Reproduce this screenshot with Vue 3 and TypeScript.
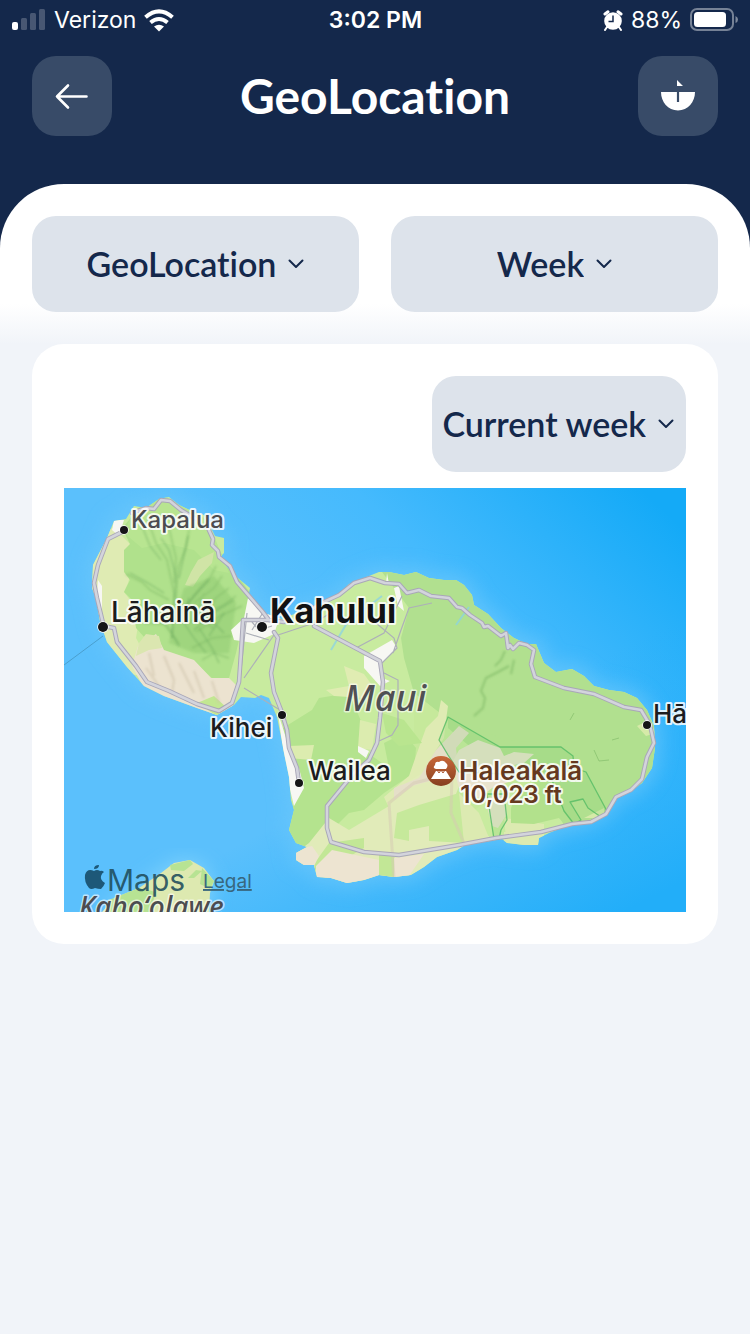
<script setup lang="ts">
import { ref } from 'vue'

interface Place {
  name: string
  x: number
  y: number
  size: number
  weight: number
  fill: string
  dot?: { x: number; y: number; r: number }
  anchor?: 'start' | 'middle' | 'end'
  italic?: boolean
}

const metric = ref('GeoLocation')
const period = ref('Week')
const range = ref('Current week')

const metrics = ['GeoLocation', 'Activity']
const periods = ['Day', 'Week', 'Month']
const ranges = ['Current week', 'Last week']

const places: Place[] = [
  { name: 'Kapalua', x: 67, y: 40, size: 24, weight: 500, fill: '#4c4c50', dot: { x: 60, y: 42, r: 4 } },
  { name: 'Lāhainā', x: 47, y: 134, size: 28, weight: 500, fill: '#1c1c1e', dot: { x: 39, y: 139, r: 5 } },
  { name: 'Kahului', x: 206, y: 135, size: 34, weight: 700, fill: '#111113', dot: { x: 198, y: 139, r: 5 } },
  { name: 'Maui', x: 280, y: 223, size: 36, weight: 500, fill: '#505054', italic: true },
  { name: 'Kihei', x: 146, y: 249, size: 26, weight: 500, fill: '#1c1c1e', dot: { x: 218, y: 227, r: 4 } },
  { name: 'Wailea', x: 244, y: 292, size: 26, weight: 500, fill: '#1c1c1e', dot: { x: 235, y: 295, r: 4 } },
  { name: 'Hāna', x: 589, y: 235, size: 26, weight: 500, fill: '#1c1c1e', dot: { x: 583, y: 237, r: 4 } },
  { name: 'Haleakalā', x: 395, y: 292, size: 26, weight: 600, fill: '#65391f' },
  { name: '10,023 ft', x: 447, y: 315, size: 24, weight: 600, fill: '#65391f', anchor: 'middle' },
  { name: 'Kahoʻolawe', x: 15, y: 429, size: 28, weight: 500, fill: '#4c4c50', italic: true },
]

const island =
  'M50 33L62 31L70 18L82 20L95 11L105 9L115 17L130 24L140 27L147 40L151 48L160 50L160 65L155 70L170 87L186 100L184 110L200 125L218 131L245 120L264 115L276 106L285 96L300 90L315 84L325 84L340 87L352 84L365 90L380 92L392 92L400 97L408 107L410 117L424 126L437 140L450 150L463 156L472 156L480 175L492 184L508 181L520 188L530 198L545 202L560 204L573 210L583 222L590 238L591 260L588 280L578 295L567 303L555 307L545 320L537 328L520 335L500 339L485 345L475 350L474 357L460 357L443 355L438 351L401 357L393 362L373 369L360 379L347 387L330 389L315 387L300 392L283 395L267 390L253 389L250 377L240 377L232 372L232 365L243 359L232 355L225 342L230 322L227 312L225 289L220 265L217 249L213 229L205 210L197 207L191 210L177 209L170 217L153 227L133 220L100 208L80 198L63 179L43 154L36 133L32 110L28 100L29 77L43 50Z'

const highways =
  'M58 44L44 51L34 77L30 95L33 110L39 135M39 138L50 140L53 154L72 178L83 194L105 203L133 216L155 223L168 215L175 194L177 165L179 132H205M68 25L82 20L90 21L97 12L106 13L117 22L132 31M144 40L149 51L148 57L154 63L155 69L166 78L173 94L198 123L205 132M210 144L214 150L207 185L210 204L217 222L223 242L225 260L233 280L235 295M205 132L220 134M250 138L316 173L319 194L316 230L313 255L305 272L290 285L263 318L263 340L267 354L300 364L335 367L395 357L432 350L477 344L508 336L527 334L542 326L552 309L567 302L578 291L583 269L590 255L586 237L577 222L560 219L530 206L500 200L471 189L467 176L470 162L463 157L455 155L449 161L446 157L444 160L442 145L437 148L424 138L420 139L418 135L406 127L398 120L393 119L385 110L367 108L355 102L343 105L335 96L321 95L306 90L290 95L275 107L262 113L235 128'
</script>

<template>
  <div class="screen">
    <header class="top">
      <div class="status">
        <div class="status-side">
          <svg class="signal" viewBox="0 0 34 22" aria-hidden="true">
            <rect x="0" y="13" width="6" height="8" rx="2" fill="#fff" />
            <g fill="#fff" opacity="0.22">
              <rect x="9" y="9" width="6" height="12" rx="1.5" />
              <rect x="18" y="4" width="6" height="17" rx="1.5" />
              <rect x="27" y="0" width="6" height="21" rx="1.5" />
            </g>
          </svg>
          <span>Verizon</span>
          <svg class="wifi" viewBox="0 0 30 23" aria-hidden="true">
            <g fill="none" stroke="#fff" stroke-width="4">
              <path d="M1.5 8.3Q15-3.5 28.500 8.3" />
              <path d="M6.500 13.500Q15 6.500 23.500 13.500" />
            </g>
            <path d="M10 17.600Q15 13.800 20 17.600L15 22.600Z" fill="#fff" />
          </svg>
        </div>
        <time class="clock">3:02 PM</time>
        <div class="status-side status-end">
          <svg class="alarm" viewBox="0 0 20 21" aria-hidden="true">
            <g stroke="#fff" stroke-linecap="round" fill="none">
              <path d="M2 4L5 1.800M18 4L15 1.800" stroke-width="3" />
              <path d="M4 17L2 20M16 17L18 20" stroke-width="2" />
            </g>
            <circle cx="10" cy="11" r="8.800" fill="#fff" />
            <path d="M10 5.500V11.500H5.500" fill="none" stroke="#14284b" stroke-width="1.500" />
          </svg>
          <span>88%</span>
          <svg class="battery" viewBox="0 0 49 24" aria-hidden="true">
            <rect x="1" y="1" width="42" height="21" rx="6" fill="none" stroke="#fff" stroke-opacity="0.42" stroke-width="2" />
            <rect x="4" y="4" width="32" height="15" rx="3.500" fill="#fff" />
            <path d="M45.500 8Q48 9 48 11.500Q48 14 45.500 15Z" fill="#fff" opacity="0.45" />
          </svg>
        </div>
      </div>
      <div class="bar">
        <button class="square" type="button" aria-label="Back">
          <svg viewBox="0 0 80 80" aria-hidden="true">
            <path d="M36 29.500L25 40.500L36 51.500M25 40.500H54.500" fill="none" stroke="#fff" stroke-width="2.600" stroke-linecap="round" stroke-linejoin="round" />
          </svg>
        </button>
        <h1>GeoLocation</h1>
        <button class="square" type="button" aria-label="Sailing menu">
          <svg viewBox="0 0 80 80" aria-hidden="true">
            <path d="M39 24L45 30H39ZM23 36H57C57 46 50 54.500 40 54.500S23 46 23 36Z" fill="#fff" />
            <path d="M40 36V46" stroke="#384b68" stroke-width="2.200" />
          </svg>
        </button>
      </div>
    </header>

    <main>
      <section class="filters">
        <label class="pick">
          <select v-model="metric" aria-label="Metric">
            <option v-for="m in metrics" :key="m">{{ m }}</option>
          </select>
          <svg class="chevron" viewBox="0 0 16 10" aria-hidden="true"><path d="M1.500 1.500L8 8L14.500 1.500" /></svg>
        </label>
        <label class="pick">
          <select v-model="period" aria-label="Period">
            <option v-for="p in periods" :key="p">{{ p }}</option>
          </select>
          <svg class="chevron" viewBox="0 0 16 10" aria-hidden="true"><path d="M1.500 1.500L8 8L14.500 1.500" /></svg>
        </label>
      </section>

      <section class="card">
        <label class="pick pick-range">
          <select v-model="range" aria-label="Range">
            <option v-for="r in ranges" :key="r">{{ r }}</option>
          </select>
          <svg class="chevron" viewBox="0 0 16 10" aria-hidden="true"><path d="M1.500 1.500L8 8L14.500 1.500" /></svg>
        </label>

        <svg class="map" viewBox="0 0 622 424" role="group" aria-label="Map of Maui">
          <defs>
            <linearGradient id="sea" x1="0.450" y1="0.500" x2="1" y2="0.100">
              <stop offset="0" stop-color="#5bc0fc" />
              <stop offset="0.450" stop-color="#45bafd" />
              <stop offset="1" stop-color="#14aaf7" />
            </linearGradient>
            <linearGradient id="deep" x1="0.600" y1="0.600" x2="0.900" y2="1">
              <stop offset="0" stop-color="#22aef9" stop-opacity="0" />
              <stop offset="1" stop-color="#22aef9" />
            </linearGradient>
            <linearGradient id="peak" x1="0" y1="0" x2="0" y2="1">
              <stop offset="0" stop-color="#c9683a" />
              <stop offset="1" stop-color="#86401f" />
            </linearGradient>
            <filter id="glow" x="-20%" y="-20%" width="140%" height="140%"><feGaussianBlur stdDeviation="9" /></filter>
            <filter id="soft" x="-20%" y="-20%" width="140%" height="140%"><feGaussianBlur stdDeviation="1" /></filter>
            <clipPath id="land"><path :d="island" /></clipPath>
          </defs>

          <rect width="622" height="424" fill="url(#sea)" />
          <rect width="622" height="424" fill="url(#deep)" />
          <path :d="island" fill="#6cc8fb" stroke="#6cc8fb" stroke-width="12" filter="url(#glow)" opacity="0.650" />
          <path d="M0 177L39 148" stroke="#4a9fce" stroke-width="1" />

          <!-- Kahoʻolawe -->
          <path d="M38 424L50 410L75 398L97 382L110 373L126 371L140 378L150 393L146 424Z" fill="#7cd0fb" filter="url(#glow)" />
          <path d="M38 424L50 410L75 400L97 385L110 375L126 372L140 380L150 393L146 405L145 424Z" fill="#dde9b0" />
          <path d="M106 377L126 372L129 376L120 383L107 382ZM45 412L75 400L92 404L86 424H40ZM138 380L150 393L146 401L136 396ZM124 390L132 382L138 383L130 390Z" fill="#b7e393" />

          <path :d="island" fill="#c8eb9f" />
          <g clip-path="url(#land)">
            <!-- West Maui mountains -->
            <path d="M25 45L50 40L66 56L60 70L68 80L64 95L60 104L76 125L72 150L80 165L90 190L60 185L35 150L20 100Z" fill="#dfebb3" />
            <path d="M60 62L66 56L58 40L72 24L90 18L115 22L145 45L160 70L190 110L180 130L172 165L165 190L150 192L135 178L110 170L90 160L72 140L68 112L60 104L66 92L60 84Z" fill="#b0e18c" />
            <path d="M70 22L100 8L140 30L150 48L165 85L150 82L130 62L100 55L78 60L60 45Z" fill="#b8e591" />
            <path d="M134 72L150 64L148 75L136 88L129 99L121 97L127 84Z" fill="#d0e4a6" />
            <path d="M74 158L92 146L100 162L130 172L147 190L165 190L173 198L168 222L150 228L110 214L80 200L68 178Z" fill="#ece3d0" />
            <path d="M75 155L82 146L95 148L98 160L85 162L72 168Z" fill="#dbe6b0" />
            <path d="M133 215L150 208L163 220L153 228Z" fill="#c2e792" />
            <path d="M120 100L150 88L172 115L165 165L130 165L105 155L112 125Z" fill="#94cd76" opacity="0.600" filter="url(#soft)" />
            <g fill="none" stroke="#86c06c" stroke-width="2" opacity="0.500" filter="url(#soft)">
              <path d="M84 32L92 55L103 72L110 105L108 150M105 40L112 70L110 95M125 42L122 60L114 80L112 110M62 86L78 94L86 102L105 112M152 78L146 90L138 98L116 125M165 100L152 110L146 118L125 135M178 118L156 128L132 144M80 135L100 136L115 156M168 148L148 150L128 160M165 170L150 165L138 172M140 105L130 130L150 140M158 88L150 100L130 115M172 108L158 118L140 126" />
            </g>
            <g fill="none" stroke="#5f9f58" stroke-width="1.200" opacity="0.450" filter="url(#soft)">
              <path d="M78 38L86 58L97 72M97 50L105 62L112 88L110 120L108 150M124 48L115 90M66 85L84 95L100 105M145 92L130 108L118 125M170 112L150 124L130 142M92 130L104 138L115 158M140 125L150 135L160 145M135 140L148 160L155 175M120 135L130 150L142 165M160 125L145 148M125 110L120 128" />
            </g>
            <g fill="none" stroke="#cfc3ab" stroke-width="2" opacity="0.600" filter="url(#soft)">
              <path d="M85 165L90 188M100 168L110 192L108 205M115 175L130 205M130 183L140 210M148 193L155 215M82 180L95 198" />
            </g>

            <!-- Upcountry forests -->
            <path d="M315 80H400L480 150L600 200V300L540 325L500 336L470 300L450 262L382 230L350 205L340 170L337 150L345 120Z" fill="#b1e08f" />
            <path d="M350 205L382 230L376 262L440 258L500 262L520 300L470 320L440 300L400 330L350 300Z" fill="#c6e99b" />
            <path d="M384 225L410 238L440 252L498 256L514 268L524 284L545 322L520 335L500 338L486 300L450 275L410 262L384 240Z" fill="#b1e08f" />
            <path d="M219 240L248 222L255 210L285 205L300 240L294 258L325 280L320 255L340 245L352 260L350 285L320 305L300 322L285 325L265 345L235 362L222 342L232 310Z" fill="#b4e38e" />
            <path d="M280 178L300 186L310 200L300 210L270 208L262 202L285 198Z" fill="#e0ecb2" />
            <path d="M377 212L384 218L382 232L380 250L372 262L360 290L325 320L320 309L345 288L353 265L362 240L374 228Z" fill="#dfebb3" />
            <path d="M318 225L340 232L358 255L335 258L322 245Z" fill="#b9e58f" />
            <path d="M225 258L250 257L247 272L225 270ZM296 232L312 236L308 262L294 260Z" fill="#dcecaf" />

            <!-- South slopes -->
            <path d="M225 370L245 355L265 330L285 342L325 318L345 293L385 270L400 285L392 306L410 330L430 355L395 362L345 388L280 397L240 382Z" fill="#e1ebb9" />
            <path d="M333 325L355 317L395 305L410 325L402 355L365 353L365 338L345 342L345 353L330 350Z" fill="#c6e99b" />
            <path d="M265 355L300 350L300 360L262 382L250 376ZM315 365L330 365L332 390H315ZM248 370L260 375L262 385L253 388Z" fill="#c2e796" />
            <path d="M228 362L248 358L255 368L250 378H235ZM252 378L268 362L315 372V388L285 396L252 392ZM330 370L360 366L345 388L330 390Z" fill="#ede4d1" />
            <path d="M330 300L355 290L372 262L395 238L405 245L392 260L395 285L348 298L330 312Z" fill="#e5dfc8" />
            <path d="M395 262L414 252L436 260L440 268L450 264L470 266L460 275L445 278L450 292L428 300L415 310L395 300L388 275Z" fill="#e9e3ce" />
            <path d="M421 310L440 306L443 326L434 340L428 338Z" fill="#e9e3ce" />
            <path d="M395 305L415 325L425 350L400 355ZM440 330L480 336L480 345L442 350ZM440 344H480V360H440Z" fill="#dceab1" />
            <path d="M447 320L455 300L480 290L500 315L495 330L470 336L447 335Z" fill="#b2e18c" />
            <path d="M573 238L585 232L592 245L582 248ZM540 320L520 330L540 330Z" fill="#d6eaa8" />
            <g fill="none" stroke="#7db765" stroke-width="2" opacity="0.600" filter="url(#soft)">
              <path d="M441 163L437 172L431 178M445 178L434 184L422 190L417 203L421 210L419 220L410 228M450 172L447 186" />
            </g>
            <path d="M545 272L535 273L530 262M555 250L548 252M510 225L506 232" fill="none" stroke="#7db765" stroke-width="1" opacity="0.600" />
            <path d="M330 390L325 315L350 295L390 285M388 285L387 325L400 355" fill="none" stroke="#d6c9b4" stroke-width="3" opacity="0.500" />

            <!-- Towns -->
            <path d="M184 110L200 125L216 128L210 146L190 155L170 152L167 142L180 130ZM300 168L328 152L333 160L318 175L318 190L326 193L316 198L300 180ZM214 225L222 250L228 270L235 280L240 300L230 318L222 285ZM34 92L38 98L38 122L32 120ZM330 100L335 98L340 123L334 118ZM50 32L60 32L55 48L48 42ZM323 85L325 96L322 96ZM294 258L305 263L302 270L294 264Z" fill="#f7f7f3" />
          </g>

          <!-- Haleakalā National Park -->
          <g fill="#7ccc70" fill-opacity="0.180" stroke="#59bd66" stroke-opacity="0.850" stroke-width="1.300" stroke-linejoin="round">
            <path d="M384 267L375 252L384 229L410 244L436 259H497L509 268L510 280L522 284L544 325L537 329L524 320L519 311L506 314L517 332L510 336L500 323L488 292L440 286L395 284Z" />
            <path d="M423 306L430 351H435L437 342L443 332L440 306Z" />
          </g>

          <!-- Streams and side roads -->
          <path d="M267 162L283 135L318 108M392 137L405 119" fill="none" stroke="#88d2e8" stroke-width="2" opacity="0.700" />
          <g fill="none" stroke="#adb0b8" stroke-width="1.200">
            <path d="M214 147L250 135L275 120M292 160L320 145L338 108M329 165L337 142L345 120L368 115M306 130L330 150L333 160L318 175M320 185L334 192L334 237L328 247L315 253M180 190L210 147M182 145L205 152M183 125L176 192M180 200L216 222" />
            <path d="M188 142L200 123M188 134L195 142L208 138" />
          </g>

          <!-- Highways -->
          <g fill="none" stroke-linejoin="round" stroke-linecap="round">
            <path :d="highways" stroke="#a9a7b8" stroke-width="4.500" />
            <path :d="highways" stroke="#d3d4dc" stroke-width="2.600" />
          </g>

          <!-- Summit marker -->
          <circle cx="377" cy="283" r="15" fill="url(#peak)" />
          <path d="M372 281Q368 280 371 277Q371 273 375 274Q379 271 382 275Q385 277 382 281H372M372 283H382L387 291H367Z" fill="#fff" />
          <path d="M373 282L375 285L377 282L379 285L381 282" fill="none" stroke="#a95029" stroke-width="1" />

          <!-- Places -->
          <g v-for="p in places" :key="p.name">
            <circle v-if="p.dot" :cx="p.dot.x" :cy="p.dot.y" :r="p.dot.r" fill="#151517" stroke="#fff" stroke-width="1.500" paint-order="stroke" />
            <text
              class="place"
              :class="{ region: p.italic }"
              :x="p.x"
              :y="p.y"
              :font-size="p.size"
              :font-weight="p.weight"
              :text-anchor="p.anchor ?? 'start'"
              :fill="p.fill"
            >{{ p.name }}</text>
          </g>

          <!-- Attribution -->
          <path d="M36 383Q33 381 30 383Q23 380 21 387Q20 394 25 400Q27 402 31 400Q34 401 37 401Q40 398 41 395Q36 392 37 388Q38 385 40 384Q38 382 36 383M30 381Q30 377 35 377Q35 381 30 381" fill="#1d5878" />
          <text class="brand" x="43" y="403" font-size="30">Maps</text>
          <a href="#legal"><text class="legal" x="139" y="400" font-size="19">Legal</text></a>
        </svg>
      </section>
    </main>
  </div>
</template>

<style>
html,
body {
  background: #f1f4f9;
}
</style>

<style scoped>
.screen {
  --navy: #14284b;
  min-height: 100vh;
  background: #f1f4f9;
  color: var(--navy);
  font-family: Inter, 'Liberation Sans', sans-serif;
}

.top {
  box-sizing: border-box;
  height: 248px;
  background: var(--navy);
  color: #fff;
}

.status {
  display: grid;
  grid-template-columns: 1fr auto 1fr;
  align-items: center;
  height: 40px;
  padding: 0 11px 0 12px;
  font-size: 23px;
  line-height: 40px;
}

.status-side {
  display: flex;
  align-items: center;
  gap: 8px;
}

.status-end {
  justify-content: flex-end;
}

.clock {
  font-weight: 600;
}

.signal {
  width: 34px;
  height: 22px;
}

.wifi {
  width: 30px;
  height: 23px;
}

.alarm {
  width: 20px;
  height: 21px;
}

.battery {
  width: 49px;
  height: 24px;
}

.bar {
  display: flex;
  align-items: center;
  justify-content: space-between;
  padding: 16px 32px 0;
}

h1 {
  margin: 0;
  font-family: Lato, 'Liberation Sans', sans-serif;
  font-size: 48px;
  font-weight: 700;
  font-variant-ligatures: none;
  line-height: 80px;
}

.square {
  width: 80px;
  height: 80px;
  padding: 0;
  border: 0;
  border-radius: 24px;
  background: #384b68;
}

.square svg {
  display: block;
  width: 100%;
}

main {
  margin-top: -64px;
}

.filters {
  display: flex;
  gap: 32px;
  padding: 32px;
  border-radius: 64px 64px 0 0;
  background: linear-gradient(#fff 75%, #f1f4f9);
}

.pick {
  display: flex;
  flex: 1;
  align-items: center;
  justify-content: center;
  gap: 12px;
  height: 96px;
  border-radius: 24px;
  background: #dde3eb;
}

.pick select {
  padding: 0;
  border: 0;
  appearance: none;
  field-sizing: content;
  background: none;
  color: var(--navy);
  font-family: Lato, 'Liberation Sans', sans-serif;
  font-size: 34px;
  font-weight: 600;
  font-variant-ligatures: none;
  line-height: 48px;
}

.pick-range {
  flex: none;
  align-self: flex-end;
  padding: 0 12px 0 10px;
}

.chevron {
  width: 16px;
  height: 10px;
  fill: none;
  stroke: var(--navy);
  stroke-width: 2;
  stroke-linecap: round;
  stroke-linejoin: round;
}

.card {
  display: flex;
  flex-direction: column;
  gap: 16px;
  margin: 0 32px;
  padding: 32px;
  border-radius: 32px;
  background: #fff;
}

.map {
  display: block;
  width: 100%;
  height: auto;
  overflow: hidden;
}

.place {
  paint-order: stroke;
  stroke: #fff;
  stroke-opacity: 0.85;
  stroke-width: 4px;
  stroke-linejoin: round;
}

.region {
  font-family: 'Noto Sans', 'Liberation Sans', sans-serif;
  font-style: italic;
  stroke-opacity: 0.6;
  stroke-width: 3px;
}

.brand {
  fill: #1f4d5c;
  fill-opacity: 0.9;
}

.legal {
  fill: #38677f;
  text-decoration: underline;
}
</style>
